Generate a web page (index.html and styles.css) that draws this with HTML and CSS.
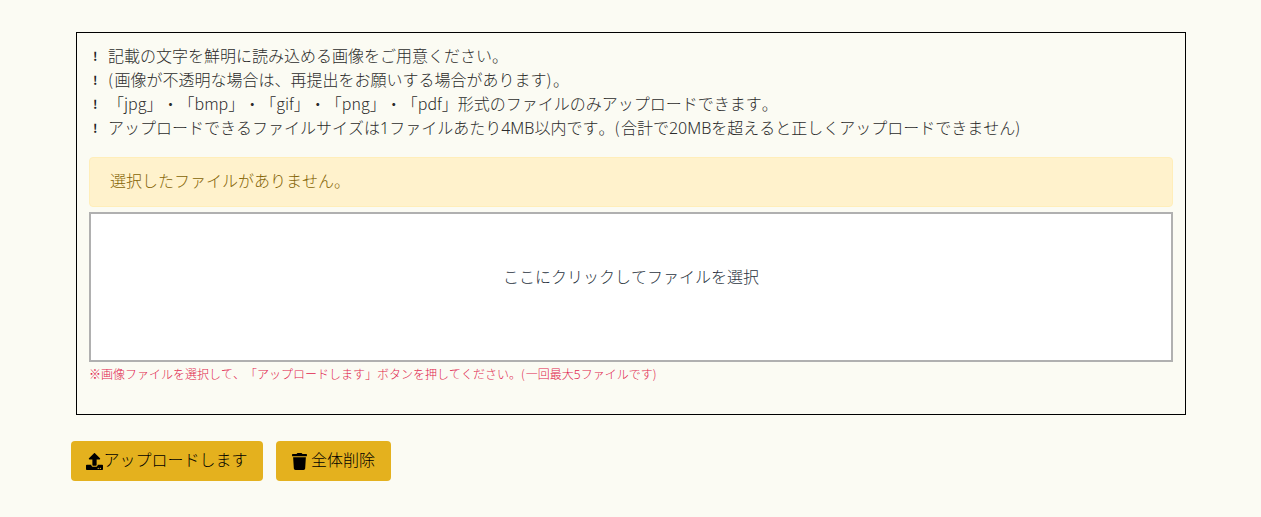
FILE: index.html
```html
<!DOCTYPE html>
<html lang="ja">
<head>
<meta charset="utf-8">
<title>アップロード</title>
<link rel="stylesheet" href="styles.css">
</head>
<body>
<main class="page">
  <section class="panel">
    <ul class="notes">
      <li><span class="mark">!</span><span>記載の文字を鮮明に読み込める画像をご用意ください。</span></li>
      <li><span class="mark">!</span><span><span class="paren">(</span>画像が不透明な場合は、再提出をお願いする場合があります<span class="paren">)</span>。</span></li>
      <li><span class="mark">!</span><span>「jpg」・「bmp」・「gif」・「png」・「pdf」形式のファイルのみアップロードできます。</span></li>
      <li><span class="mark">!</span><span>アップロードできるファイルサイズは<span class="num">1</span>ファイルあたり<span class="num">4MB</span>以内です。<span class="paren">(</span>合計で<span class="num">20MB</span>を超えると正しくアップロードできません<span class="paren">)</span></span></li>
    </ul>
    <div class="alert">選択したファイルがありません。</div>
    <div class="dropzone">ここにクリックしてファイルを選択</div>
    <p class="hint">※画像ファイルを選択して、「アップロードします」ボタンを押してください。<span class="paren">(</span>一回最大<span class="num">5</span>ファイルです<span class="paren">)</span></p>
  </section>
  <div class="actions">
    <button class="btn btn-upload" type="button">
      <svg class="icon icon-upload" viewBox="0 0 512 512" aria-hidden="true"><path d="M296 384h-80c-13.300 0-24-10.700-24-24V192h-87.700c-17.800 0-26.700-21.500-14.100-34.100L242.300 5.700c7.500-7.500 19.800-7.500 27.300 0l152.200 152.200c12.600 12.600 3.700 34.100-14.100 34.100H320v168c0 13.300-10.700 24-24 24zm216-8v112c0 13.300-10.700 24-24 24H24c-13.300 0-24-10.700-24-24V376c0-13.300 10.700-24 24-24h136v8c0 30.900 25.100 56 56 56h80c30.900 0 56-25.100 56-56v-8h136c13.300 0 24 10.700 24 24zm-124 88c0-11-9-20-20-20s-20 9-20 20 9 20 20 20 20-9 20-20zm64 0c0-11-9-20-20-20s-20 9-20 20 9 20 20 20 20-9 20-20z"/></svg>アップロードします
    </button>
    <button class="btn btn-delete" type="button">
      <svg class="icon icon-trash" viewBox="0 0 448 512" aria-hidden="true"><path d="M432 32H312l-9.400-18.700A24 24 0 0 0 281.100 0H166.800a23.700 23.700 0 0 0-21.400 13.300L136 32H16A16 16 0 0 0 0 48v32a16 16 0 0 0 16 16h416a16 16 0 0 0 16-16V48a16 16 0 0 0-16-16zM53.200 467a48 48 0 0 0 47.900 45h245.800a48 48 0 0 0 47.900-45L416 128H32z"/></svg>全体削除
    </button>
  </div>
</main>
</body>
</html>
```
FILE: styles.css
```css
* { box-sizing: border-box; }
html, body { margin: 0; padding: 0; }
body {
  background: #fbfbf3;
  color: #2b2b2b;
  font-family: "Noto Sans CJK JP", "Noto Sans", sans-serif;
  font-weight: 300;
  font-size: 16px;
  font-kerning: none;
  text-spacing-trim: space-all;
  height: 517px;
  overflow: hidden;
}
.page { padding: 32px 0 0 71px; }
.panel {
  width: 1110px;
  height: 383px;
  margin-left: 5px;
  border: 1px solid #000;
  padding: 11px 12px 12px;
}
.notes { list-style: none; margin: 0; padding: 0; }
.notes li { display: flex; height: 24px; line-height: 22px; white-space: nowrap; }
.mark { width: 19px; padding-left: 4px; font-size: 12px; font-weight: 700; color: #222; line-height: 24px; }
.num { font-family: "Noto Sans", sans-serif; }
.paren { letter-spacing: 1.5px; }
.alert {
  margin-top: 17px;
  height: 50px;
  padding: 0 20px;
  line-height: 44px;
  background: #fff2cc;
  border: 1px solid #ffeeba;
  border-radius: 4px;
  color: #856404;
}
.dropzone {
  margin-top: 5px;
  height: 150px;
  padding-top: 48px;
  line-height: 28px;
  background: #fff;
  border: 2px solid #b0b0b0;
  text-align: center;
  color: #2a3340;
}
.hint {
  margin: 5px 0 0;
  font-size: 12px;
  line-height: 14px;
  color: #e0244c;
}
.hint .paren { letter-spacing: 1px; }
.actions { display: flex; gap: 13px; margin-top: 26px; }
.btn {
  display: flex;
  align-items: center;
  justify-content: center;
  height: 40px;
  border: none;
  border-radius: 4px;
  background: #e4b11e;
  color: #000;
  font: inherit;
  padding: 0 0 5px;
}
.btn-upload { width: 192px; }
.btn-delete { width: 115px; }
.icon { fill: #000; display: block; flex: none; }
.icon-upload { width: 17px; height: 17px; margin-top: 5px; }
.icon-trash { width: 15px; height: 17px; margin: 5px 4px 0 0; }
```
